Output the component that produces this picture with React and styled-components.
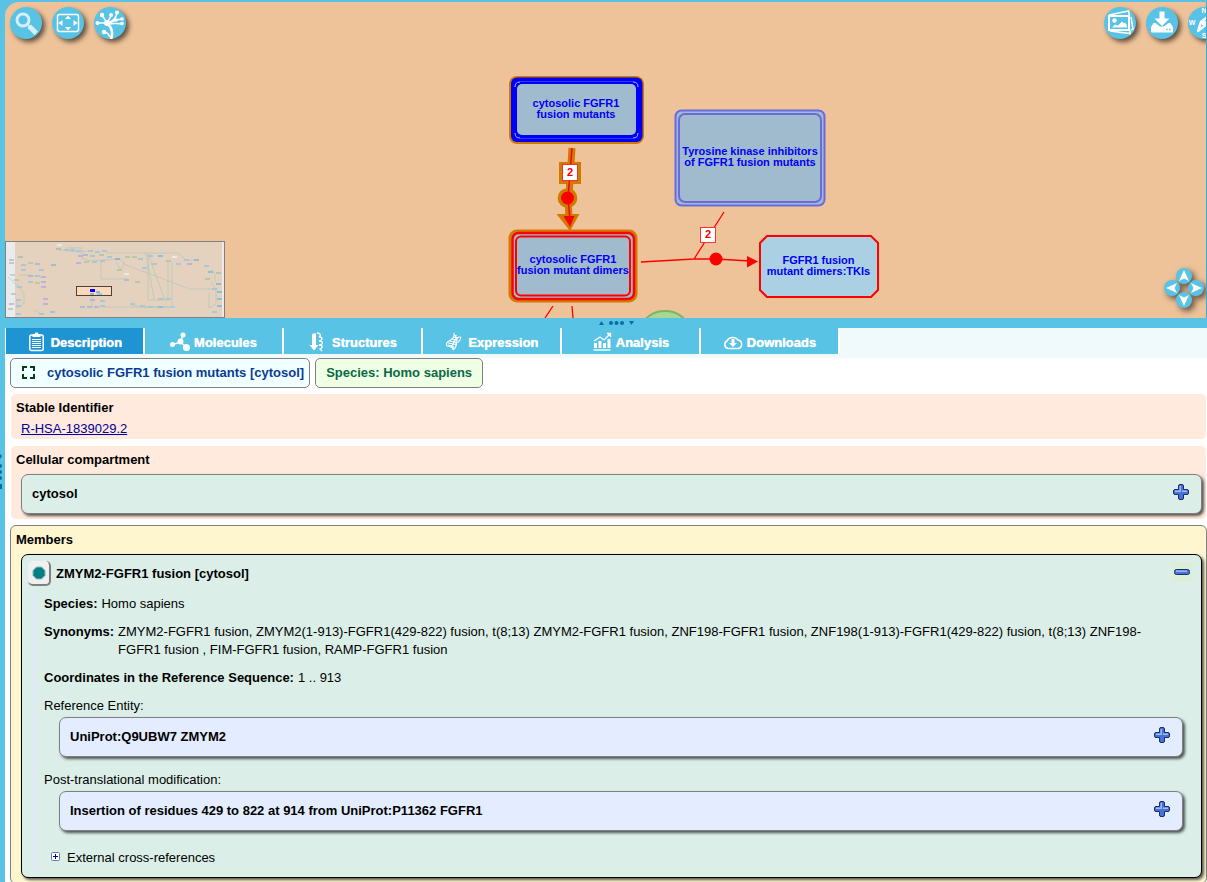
import React from "react";
import styled, { createGlobalStyle } from "styled-components";

const Global = createGlobalStyle`
  *, *::before, *::after { box-sizing: border-box; }
  html, body { margin: 0; height: 100%; }
  body {
    background: #58c3e5;
    color: #000;
    font: 13px/18px "Liberation Sans", Arial, Helvetica, sans-serif;
  }
  #root { height: 100%; }
  button { font: inherit; color: inherit; padding: 0; border: 0; cursor: pointer; }
`;

const Shell = styled.div`
  display: grid;
  grid-template-columns: 5px minmax(0, 1fr);
  height: 100vh;
  overflow: hidden;
  background: #58c3e5;
`;

const Rail = styled.div`
  display: flex;
  align-items: center;
  padding-top: 62px;
  svg { display: block; }
`;

const Main = styled.main`
  display: flex;
  flex-direction: column;
  min-width: 0;
  min-height: 0;
  padding-top: 2px;
`;

const Canvas = styled.section`
  position: relative;
  flex: none;
  height: 316px;
  overflow: hidden;
  border-right: 1px solid #3aa9d6;
  border-top-left-radius: 14px;
  background: #efc39a;
`;

const Scene = styled.svg`
  display: block;
  width: 100%;
  height: 100%;
  text {
    font: bold 11px "Liberation Sans", Arial, sans-serif;
    text-anchor: middle;
    fill: #0000f5;
  }
  text.count { fill: #f00000; }
`;

const Tools = styled.div`
  position: absolute;
  top: 5px;
  ${(p) => (p.$side === "left" ? "left: 5px;" : "right: -14px;")}
  display: flex;
  gap: 10px;
`;

const RoundButton = styled.button`
  width: 32px;
  height: 32px;
  border-radius: 50%;
  background: #58c3e5;
  box-shadow: 3px 3px 5px rgba(0, 0, 0, 0.6);
  svg { display: block; }
  text {
    font: bold 7px "Liberation Sans", Arial, sans-serif;
    text-anchor: middle;
    fill: #fff;
  }
`;

const Overview = styled.svg`
  position: absolute;
  left: 0;
  bottom: 0;
  width: 220px;
  height: 77px;
  border: 1px solid #808080;
  background: #e4d2bf;
`;

const Pad = styled.div`
  position: absolute;
  right: -18px;
  bottom: 14px;
  display: grid;
  grid-template-columns: repeat(5, 12px);
  grid-template-rows: repeat(3, 12px);
  filter: drop-shadow(3px 3px 3px rgba(0, 0, 0, 0.6));
`;

const PadButton = styled.button`
  grid-column: ${(p) => p.$col};
  grid-row: ${(p) => p.$row};
  width: 16px;
  height: 16px;
  border-radius: 50%;
  background: #58c3e5;
  svg { display: block; transform: rotate(${(p) => p.$turn || 0}deg); }
`;

const Splitter = styled.div`
  flex: none;
  display: flex;
  justify-content: center;
  align-items: center;
  height: 10px;
  padding-left: 22px;
  svg { display: block; }
`;

const Tabs = styled.nav`
  flex: none;
  display: flex;
  padding-bottom: 4px;
  border-left: 1px solid #fff;
  background: #f0fafc;
`;

const Tab = styled.button`
  display: flex;
  align-items: center;
  justify-content: center;
  gap: 4px;
  width: 139px;
  height: 26px;
  padding-top: 4px;
  border-right: 2px solid #fff;
  background: ${(p) => (p.$active ? "#1e94d2" : "#58c3e5")};
  color: #fff;
  font-weight: bold;
  text-shadow: 0 0 1px #fff;
  svg { margin-bottom: 3px; }
`;

const Details = styled.div`
  flex: 1;
  min-height: 0;
  overflow: hidden;
  display: flex;
  flex-direction: column;
  gap: 5px;
  padding-left: 5px;
  background: #fff;
  & > * { flex: none; }
`;

const Chips = styled.div`
  display: flex;
  gap: 5px;
`;

const Chip = styled.div`
  display: flex;
  align-items: center;
  gap: 12px;
  height: 30px;
  padding: 0 ${(p) => (p.$tone === "species" ? 10 : 5)}px 1px 10px;
  border: 1px solid #808080;
  border-radius: 5px;
  background: ${(p) => (p.$tone === "species" ? "#eeffe3" : "#f0ffff")};
  color: ${(p) => (p.$tone === "species" ? "#0c6848" : "#0b3a96")};
  font-weight: bold;
  svg { margin-bottom: 2px; }
`;

const Panel = styled.section`
  padding: 5px 4px ${(p) => (p.$compact ? 1 : 5)}px 5px;
  border: 1px solid ${(p) => (p.$members ? "#808080" : "#fff")};
  border-radius: 6px;
  background: ${(p) => (p.$members ? "#fdf6cf" : "#ffeadd")};
`;

const PanelTitle = styled.h2`
  margin: 0;
  font-size: 13px;
  line-height: 18px;
`;

const PanelBody = styled.div`
  padding: ${(p) => (p.$compact ? 3 : 5)}px 0 0 5px;
`;

const IdLink = styled.a`
  display: block;
  width: max-content;
  color: #00009c;
`;

const Entry = styled.div`
  display: flex;
  align-items: center;
  justify-content: space-between;
  height: 40px;
  padding: 0 10px;
  border: 1px solid #808080;
  border-radius: 7px;
  background: ${(p) => (p.$tone === "blue" ? "#e3edff" : "#dbefe8")};
  box-shadow: 2px 2px 3px rgba(0, 0, 0, 0.65);
  font-weight: bold;
`;

const Toggle = styled.button`
  width: 20px;
  height: 20px;
  ${(p) => (p.$open ? "margin-top: 1px;" : "margin-bottom: 4px;")}
  background: ${(p) => (p.$open ? "#dcedd8" : "transparent")};
  svg { display: block; }
`;

const Member = styled.article`
  padding: 6px 9px 4px 6px;
  border: 1px solid #000;
  border-radius: 7px;
  background: #dbefe8;
  box-shadow: 2px 2px 3px rgba(0, 0, 0, 0.65);
`;

const MemberHead = styled.header`
  display: flex;
  align-items: flex-start;
  gap: 5px;
  height: 25px;
`;

const MemberTitle = styled.h3`
  flex: 1;
  margin: 4px 0 0;
  font-size: 13px;
  line-height: 18px;
`;

const KindButton = styled.button`
  width: 23px;
  height: 25px;
  border-right: 2px solid #808080;
  border-bottom: 2px solid #808080;
  border-radius: 5px;
  background: #f0f0f0;
  svg { display: block; margin: 0 auto; }
`;

const MemberBody = styled.div`
  margin: 4px 9px 0 5px;
  padding: 5px 0 6px 8px;
  border-left: 3px solid #e4e9f9;
`;

const Facts = styled.dl`
  display: flex;
  flex-direction: column;
  gap: 10px;
  margin: 0;
`;

const Fact = styled.div`
  display: flex;
  gap: 4px;
  dt { flex: none; font-weight: bold; }
  dd { margin: 0; padding-right: 24px; }
`;

const Group = styled.section`
  margin-top: ${(p) => p.$gap}px;
`;

const GroupLabel = styled.div`
  margin-bottom: 2px;
`;

const Indent = styled.div`
  padding-left: 15px;
`;

const Expander = styled.button`
  display: flex;
  align-items: center;
  gap: 7px;
  margin: 18px 0 0 7px;
  background: none;
  svg { margin-bottom: 4px; }
`;

/* ---------- icons ---------- */

const Icon = ({ size = 32, children }) => (
  <svg width={size} height={size} viewBox={`0 0 ${size} ${size}`} fill="none" aria-hidden="true">
    {children}
  </svg>
);

const SearchIcon = () => (
  <Icon>
    <circle cx="13" cy="13" r="6" stroke="#d6effa" strokeWidth="3" />
    <path d="M17.500 17.500l2.500 2.500" stroke="#d6effa" strokeWidth="2" />
    <path d="M21 21l3.500 3.500" stroke="#d6effa" strokeWidth="5" strokeLinecap="square" />
  </Icon>
);

const FitIcon = () => (
  <Icon>
    <rect x="5.500" y="7.500" width="21" height="17" rx="2" stroke="#fff" strokeWidth="1.500" />
    <path d="M16 8.500l3 3.500h-6zM16 23.500l3-3.500h-6zM6.500 16l4-3v6zM25.500 16l-4-3v6z" fill="#fff" />
  </Icon>
);

const TreeIcon = () => (
  <Icon>
    <path d="M13 16L8 8M13 16l-9.500 0M13 16l4-7M14 16c6-2 8-5 9-10M15 17c3-3 5-3 7-4l6-1M15 17c4-1 9 0 13-.5M16 30c-1-2-3-5-6-5" stroke="#fff" strokeWidth="1.500" />
    <circle cx="13" cy="16" r="3" fill="#fff" />
    <circle cx="8" cy="8" r="2.200" fill="#fff" />
    <circle cx="3.500" cy="16" r="2" fill="#fff" />
    <circle cx="17" cy="8" r="2" fill="#fff" />
    <circle cx="23" cy="5.500" r="2" fill="#fff" />
    <circle cx="22" cy="13" r="1.800" fill="#fff" />
    <circle cx="28" cy="12" r="1.800" fill="#fff" />
    <circle cx="28" cy="16.500" r="1.800" fill="#fff" />
    <circle cx="10" cy="25" r="2.200" fill="#fff" />
    <path d="M17 32c2-5 1-11-3-15" stroke="#fff" strokeWidth="2.800" />
  </Icon>
);

const ImageIcon = () => (
  <Icon>
    <path d="M5 8L24.500 4l1 5M27 10l2 12-2 1M6 24l20 2.500v-3" stroke="#fff" strokeWidth="1.600" />
    <rect x="5" y="9" width="20" height="14" stroke="#fff" strokeWidth="2" />
    <circle cx="10.500" cy="13.500" r="2.200" fill="#fff" />
    <path d="M8 20.500l3-3 3 1 4-4 2 2 1-1 2 3v2z" fill="#fff" />
  </Icon>
);

const SaveIcon = () => (
  <Icon>
    <path d="M13.500 4.500h5v7h5L16 19l-7.500-7.500h5z" fill="#fff" />
    <path d="M7.500 16h2l5 4h3l5-4h2l2.500 4.500h-22z" fill="#fff" />
    <rect x="5" y="19.500" width="22" height="6" rx="1" fill="#fff" />
    <path d="M20 22.500h1.500M23 22.500h1.500" stroke="#58c3e5" strokeWidth="1.500" />
  </Icon>
);

const CompassIcon = () => (
  <Icon>
    <text x="16" y="6">N</text>
    <text x="4" y="18">W</text>
    <text x="16" y="31">S</text>
    <path d="M10 24l3-9 9-7-3 9z" stroke="#fff" strokeWidth="2.400" strokeLinejoin="round" />
    <circle cx="16" cy="16" r="2.500" fill="#fff" />
  </Icon>
);

const PadArrow = () => (
  <Icon size={16}>
    <path d="M8 2l5 11-5-2.500L3 13z" fill="#fff" />
  </Icon>
);

const ClipboardIcon = () => (
  <Icon size={20}>
    <rect x="2.800" y="3" width="13.400" height="15.500" rx="1.500" stroke="#fff" strokeWidth="1.500" />
    <path d="M5.500 2h2l1-1.500h2l1 1.500h2v3h-8z" fill="#fff" />
    <path d="M5 7.500h9M5 9.500h9M5 11.500h9M5 13.500h9M5 15.500h9" stroke="#fff" strokeWidth="1" />
  </Icon>
);

const MoleculeIcon = () => (
  <Icon size={20}>
    <path d="M13 3l-2.500 7L3 12.500M10.500 10l5.500 5" stroke="#fff" strokeWidth="1.400" />
    <circle cx="13" cy="3" r="2.500" fill="#fff" />
    <circle cx="10.500" cy="9.500" r="3" fill="#fff" />
    <circle cx="2.500" cy="12.500" r="2.500" fill="#fff" />
    <circle cx="16.500" cy="15.500" r="3.600" fill="#fff" />
  </Icon>
);

const StructureIcon = () => (
  <Icon size={20}>
    <path d="M4 2l4-1v12h2.500L6 18.500 1.500 13H4z" fill="#fff" />
    <path d="M9 1c3 0 5 2 2 4M11 5c4 0 4 3 0 4M11 9c5 0 4 4 0 4M11 13c4 0 4 3 1 4l2 2" stroke="#fff" strokeWidth="1.300" />
  </Icon>
);

const DnaIcon = () => (
  <Icon size={20}>
    <path d="M10 1c1 4-1 6-5 8-2 1-3 3-2 5 5 1 6-1 7-4 1-3 3-5 7-5M5 14c3 0 4 1 4 4M9 18c5-3 4-9 2-15M17 5c-1 5-3 6-6 6" stroke="#fff" strokeWidth="1.100" />
    <path d="M10 3l3 1M9 5l5 1M7 7l7 1M5 9l8 1.500M4 11l8 1.500M4 13l6 1.500M6 15l4 1" stroke="#fff" strokeWidth="1" />
  </Icon>
);

const AnalysisIcon = () => (
  <Icon size={20}>
    <path d="M1.500 18h17" stroke="#fff" strokeWidth="1.400" />
    <path d="M3.500 16v-5M8 16V9M12.500 16v-5M17 16V7" stroke="#fff" strokeWidth="3" />
    <path d="M2 9l6-4 4 3 6-6M15 1.500h3.500V5" stroke="#fff" strokeWidth="1.300" />
  </Icon>
);

const CloudIcon = () => (
  <Icon size={20}>
    <path d="M5 16.500a4 4 0 0 1-1-7.500 6 5 0 0 1 11-1 4.300 4.300 0 0 1 0 8.500z" stroke="#fff" strokeWidth="1.500" />
    <path d="M8.500 7h3v4H14l-4 4-4-4h2.500z" fill="#fff" />
  </Icon>
);

const ExpandIcon = () => (
  <Icon size={14}>
    <path d="M2 6V2h4M9 2h4v4M13 9v4H9M6 13H2V9" stroke="#0a3d12" strokeWidth="2" />
  </Icon>
);

const PlusIcon = () => (
  <Icon size={20}>
    <path d="M9 2.500h2a1.500 1.500 0 0 1 1.500 1.500v3.500H16A1.500 1.500 0 0 1 17.500 9v2a1.500 1.500 0 0 1-1.500 1.500h-3.500V16a1.500 1.500 0 0 1-1.500 1.500H9A1.500 1.500 0 0 1 7.500 16v-3.500H4A1.500 1.500 0 0 1 2.500 11V9A1.500 1.500 0 0 1 4 7.500h3.500V4A1.500 1.500 0 0 1 9 2.500z" fill="#4573d8" stroke="#1d2c66" />
    <path d="M9.200 4v5.200H4M11 9.200h5" stroke="#a0beff" strokeWidth="1.400" />
  </Icon>
);

const MinusIcon = () => (
  <Icon size={20}>
    <rect x="2.500" y="7.500" width="15" height="5" rx="2" fill="#4573d8" stroke="#1d2c66" />
    <path d="M4 9.200h11" stroke="#a0beff" strokeWidth="1.400" />
  </Icon>
);

/* ---------- overview map ---------- */

const MAP_NODES = [
  [53, 3, "#e9ece2"], [52, 7, "#a9c4bd"], [60, 8, "#abc7d3"], [66, 8, "#abc7d3"], [72, 9, "#abc7d3"], [74, 14, "#b9b5d9"],
  [79, 13, "#b9b5d9"], [84, 9, "#abc7d3"], [91, 10, "#abc7d3"], [98, 9, "#abc7d3"], [86, 14, "#abc7d3"], [95, 13, "#b5c9a9"],
  [72, 21, "#b9b5d9"], [80, 20, "#b5c9a9"], [88, 20, "#abc7d3"], [96, 19, "#abc7d3"], [103, 15, "#abc7d3"], [111, 17, "#8fb6d8"],
  [121, 15, "#b5c9a9"], [128, 15, "#b5c9a9"], [134, 17, "#abc7d3"], [144, 14, "#abc7d3"], [154, 14, "#8fc0d8"], [168, 15, "#e9ece2"],
  [162, 19, "#b5c9a9"], [180, 18, "#abc7d3"], [190, 18, "#8fc0d8"], [172, 22, "#abc7d3"], [183, 22, "#b9b5d9"], [138, 26, "#abc7d3"],
  [148, 22, "#abc7d3"], [113, 28, "#b5c9a9"], [120, 32, "#e9ece2"], [120, 38, "#aabfd4"], [131, 40, "#b5c9a9"], [200, 24, "#abc7d3"],
  [204, 30, "#8fc0d8"], [212, 31, "#b5c9a9"], [201, 37, "#b5c9a9"], [212, 42, "#8fc0d8"], [208, 47, "#abc7d3"], [213, 50, "#8fc0d8"],
  [213, 57, "#8fc0d8"], [213, 64, "#8fc0d8"], [208, 70, "#abc7d3"], [5, 18, "#c2c2de"], [5, 21, "#bdd2b5"], [14, 15, "#a7c7b9"],
  [17, 23, "#abc7d3"], [24, 21, "#bdcaa9"], [31, 22, "#b9b5d9"], [47, 23, "#a9bbd4"], [17, 28, "#abc7d3"], [35, 28, "#abc7d3"],
  [6, 33, "#bad3df"], [24, 34, "#b9b5d9"], [31, 34, "#abc7d3"], [37, 35, "#b9b5d9"], [10, 38, "#bdcaa9"], [24, 40, "#abc7d3"],
  [31, 41, "#bdcaa9"], [37, 40, "#b9b5d9"], [37, 45, "#b9b5d9"], [13, 45, "#a5c8da"], [7, 52, "#b9d2c0"], [12, 58, "#a5c8da"],
  [12, 64, "#a5c8da"], [5, 62, "#c2c2de"], [4, 67, "#bdd2b5"], [12, 72, "#a5c8da"], [39, 57, "#b9b5d9"], [39, 62, "#b9b5d9"],
  [46, 70, "#aabddb"], [35, 72, "#abc7d3"], [86, 58, "#b9b5d9"], [96, 59, "#abc7d3"],
  [76, 65, "#b9b5d9"], [83, 65, "#a9c4bd"], [90, 65, "#b9b5d9"], [96, 64, "#abc7d3"], [136, 64, "#abc7d3"], [144, 65, "#abc7d3"],
  [154, 57, "#abc7d3"], [162, 57, "#b0c7d3"], [154, 65, "#8fc0d8"], [166, 65, "#a9cde0"], [126, 62, "#abc7d3"],
];

const OverviewMap = () => (
  <Overview viewBox="0 0 218 75" aria-label="Pathway overview">
    <rect width="9" height="75" fill="#ebebee" />
    <rect x="216" width="2" height="75" fill="#ebebee" />
    <path
      d="M53 8l20 2 12-1M100 11h72l8 7h10M76 6v10l8 3 30-2 6 7M60 6h16M140 11l8 46M142 12v46h22M142 12l17 46M162 18v39M166 20v45H97M120 23l64 24h28M95 20v17h26M13 33h10l12 2M2 35l12 11 4 6v9l-7 5v-7M86 52v14M205 27l4 5v8M205 40l5 8v14l-7 4V50M110 20l5 8 4-8M126 63l10 2h30M28 68l8 4"
      fill="none" stroke="#b5c4ba" strokeWidth="1" opacity="0.700"
    />
    {MAP_NODES.map(([x, y, c], i) => (
      <rect key={i} x={x - 2} y={y - 1} width="5" height="2" fill={c} />
    ))}
    <rect x="70.500" y="44.500" width="35" height="9" fill="#fbd9bb" stroke="#4c4038" />
    <rect x="84" y="47" width="5" height="3" fill="#0000f5" />
    <rect x="90" y="49" width="4" height="2" fill="#a3acd4" />
    <rect x="84" y="51" width="4" height="2" fill="#8fb0c8" />
    <rect x="91" y="51" width="5" height="2" fill="#9cc9e0" />
  </Overview>
);

/* ---------- pathway diagram ---------- */

const Diagram = () => (
  <Scene aria-label="Pathway diagram">
    <g transform="translate(-5 -2)">
      <ellipse cx="665" cy="329" rx="23" ry="18" fill="#a5d990" stroke="#7fb36c" strokeWidth="2" />

      <path d="M572 148l-3 48M568 198l1 20" stroke="#d07a00" strokeWidth="7" fill="none" />
      <rect x="559" y="162" width="22" height="22" fill="#d07a00" />
      <circle cx="567.500" cy="198" r="9.800" fill="#d07a00" />
      <path d="M556.500 214h23L570 231z" fill="#d07a00" />
      <path d="M572 148l-4 50 2 22" stroke="#f00" fill="none" strokeWidth="1.500" />
      <circle cx="567.500" cy="198" r="6.500" fill="#f00" />
      <path d="M563.500 216h11l-4.500 11z" fill="#f00" />
      <rect x="562.500" y="164.500" width="15" height="16" fill="#fff" stroke="#e33" />
      <text className="count" x="570" y="176">2</text>

      <path d="M641 262l53-3 22 0 34 2M724 212l-30 47M553 306l-8 12M572 306l1 12" stroke="#f00" strokeWidth="1.300" fill="none" />
      <circle cx="716" cy="259" r="6.500" fill="#f00" />
      <path d="M747 256v11.500l11-6z" fill="#f00" />
      <rect x="700.500" y="227.500" width="15" height="15" fill="#fff" stroke="#f33" />
      <text className="count" x="708" y="238">2</text>

      <rect x="509" y="76" width="135" height="68" rx="8" fill="#d07a00" />
      <rect x="511" y="77.500" width="131.500" height="64.500" rx="6" fill="#0000fa" />
      <path d="M515 87q0-5 5-5M633 82q5 0 5 5M638 133q0 5-5 5M520 138q-5 0-5-5" stroke="#a0bace" fill="none" />
      <path d="M520 81.500h113M520 138.500h113" stroke="#2c3cf0" fill="none" />
      <rect x="517" y="84" width="119" height="51" rx="5" fill="#a0bace" />
      <text x="576" y="107">cytosolic FGFR1</text>
      <text x="576" y="118">fusion mutants</text>

      <rect x="510" y="231" width="126" height="70" rx="7" fill="#a0bace" stroke="#d07a00" strokeWidth="3" />
      <rect x="512.500" y="233" width="121.500" height="66" rx="6" fill="none" stroke="#f00" strokeWidth="2.500" />
      <rect x="516" y="236.500" width="114" height="59" rx="5" fill="none" stroke="#f00" strokeWidth="2" />
      <text x="573" y="263">cytosolic FGFR1</text>
      <text x="573" y="274">fusion mutant dimers</text>

      <rect x="675.500" y="110.500" width="149" height="95" rx="6" fill="#a0bace" stroke="#6a6ade" strokeWidth="2" />
      <rect x="679" y="114" width="142" height="88" rx="6" fill="none" stroke="#6a6ade" strokeWidth="2" />
      <text x="750" y="155">Tyrosine kinase inhibitors</text>
      <text x="750" y="166">of FGFR1 fusion mutants</text>

      <path d="M767 236h104l7 7v47l-7 7H767l-7-7v-47z" fill="#abd0e3" stroke="#f00" strokeWidth="2" />
      <text x="818.500" y="264">FGFR1 fusion</text>
      <text x="818.500" y="275">mutant dimers:TKIs</text>
    </g>
  </Scene>
);

const TABS = [
  ["Description", ClipboardIcon],
  ["Molecules", MoleculeIcon],
  ["Structures", StructureIcon],
  ["Expression", DnaIcon],
  ["Analysis", AnalysisIcon],
  ["Downloads", CloudIcon],
];

const ExpandableEntry = ({ tone, children }) => (
  <Entry $tone={tone}>
    <span>{children}</span>
    <Toggle aria-label="Expand"><PlusIcon /></Toggle>
  </Entry>
);

export default function App() {
  return (
    <>
      <Global />
      <Shell>
        <Rail>
          <svg width="3" height="36" fill="#0a6ea5" aria-hidden="true">
            <path d="M0 0l2 2-2 3z" />
            <circle cx="0" cy="12" r="2" />
            <circle cx="0" cy="18" r="2" />
            <circle cx="0" cy="24" r="2" />
            <path d="M0 30h2v5H0z" />
          </svg>
        </Rail>
        <Main>
          <Canvas>
            <Diagram />
            <Tools $side="left">
              <RoundButton aria-label="Search"><SearchIcon /></RoundButton>
              <RoundButton aria-label="Fit to window"><FitIcon /></RoundButton>
              <RoundButton aria-label="Pathway hierarchy"><TreeIcon /></RoundButton>
            </Tools>
            <Tools $side="right">
              <RoundButton aria-label="Illustrations"><ImageIcon /></RoundButton>
              <RoundButton aria-label="Export"><SaveIcon /></RoundButton>
              <RoundButton aria-label="Key"><CompassIcon /></RoundButton>
            </Tools>
            <OverviewMap />
            <Pad>
              <PadButton $col={2} $row={1} aria-label="Up"><PadArrow /></PadButton>
              <PadButton $col={1} $row={2} $turn={-90} aria-label="Left"><PadArrow /></PadButton>
              <PadButton $col={3} $row={2} $turn={90} aria-label="Right"><PadArrow /></PadButton>
              <PadButton $col={2} $row={3} $turn={180} aria-label="Down"><PadArrow /></PadButton>
              <PadButton $col={5} $row={1} aria-label="Zoom in" />
              <PadButton $col={5} $row={3} aria-label="Zoom out" />
            </Pad>
          </Canvas>

          <Splitter>
            <svg width="36" height="6" fill="#0a6ea5" aria-hidden="true">
              <path d="M0 5l2.500-4L5 5zM30 1h5l-2.500 4z" />
              <circle cx="12" cy="3" r="2" />
              <circle cx="17.500" cy="3" r="2" />
              <circle cx="23" cy="3" r="2" />
            </svg>
          </Splitter>

          <Tabs>
            {TABS.map(([label, Glyph], i) => (
              <Tab key={label} $active={i === 0}><Glyph />{label}</Tab>
            ))}
          </Tabs>

          <Details>
            <Chips>
              <Chip><ExpandIcon />cytosolic FGFR1 fusion mutants [cytosol]</Chip>
              <Chip $tone="species">Species: Homo sapiens</Chip>
            </Chips>

            <Panel $compact>
              <PanelTitle>Stable Identifier</PanelTitle>
              <PanelBody $compact><IdLink href="#R-HSA-1839029.2">R-HSA-1839029.2</IdLink></PanelBody>
            </Panel>

            <Panel>
              <PanelTitle>Cellular compartment</PanelTitle>
              <PanelBody><ExpandableEntry>cytosol</ExpandableEntry></PanelBody>
            </Panel>

            <Panel $members>
              <PanelTitle>Members</PanelTitle>
              <PanelBody>
                <Member>
                  <MemberHead>
                    <KindButton aria-label="Show protein">
                      <Icon size={14}>
                        <path d="M4.500 1h5L13 4.500v5L9.500 13h-5L1 9.500v-5z" fill="#008080" stroke="#8fb5b5" />
                      </Icon>
                    </KindButton>
                    <MemberTitle>ZMYM2-FGFR1 fusion [cytosol]</MemberTitle>
                    <Toggle $open aria-label="Collapse"><MinusIcon /></Toggle>
                  </MemberHead>
                  <MemberBody>
                    <Facts>
                      <Fact><dt>Species:</dt><dd>Homo sapiens</dd></Fact>
                      <Fact>
                        <dt>Synonyms:</dt>
                        <dd>
                          ZMYM2-FGFR1 fusion, ZMYM2(1-913)-FGFR1(429-822) fusion, t(8;13) ZMYM2-FGFR1 fusion, ZNF198-FGFR1 fusion,
                          ZNF198(1-913)-FGFR1(429-822) fusion, t(8;13) ZNF198-FGFR1 fusion , FIM-FGFR1 fusion, RAMP-FGFR1 fusion
                        </dd>
                      </Fact>
                      <Fact><dt>Coordinates in the Reference Sequence:</dt><dd>1 .. 913</dd></Fact>
                    </Facts>
                    <Group $gap={10}>
                      <GroupLabel>Reference Entity:</GroupLabel>
                      <Indent><ExpandableEntry tone="blue">UniProt:Q9UBW7 ZMYM2</ExpandableEntry></Indent>
                    </Group>
                    <Group $gap={14}>
                      <GroupLabel>Post-translational modification:</GroupLabel>
                      <Indent>
                        <ExpandableEntry tone="blue">
                          Insertion of residues 429 to 822 at 914 from UniProt:P11362 FGFR1
                        </ExpandableEntry>
                      </Indent>
                    </Group>
                    <Expander>
                      <svg width="9" height="9" fill="none" aria-hidden="true">
                        <rect x="0.500" y="0.500" width="8" height="8" rx="1" fill="#fff" stroke="#6a7aa8" />
                        <path d="M2 4.500h5M4.500 2v5" stroke="#00008c" />
                      </svg>
                      External cross-references
                    </Expander>
                  </MemberBody>
                </Member>
              </PanelBody>
            </Panel>
          </Details>
        </Main>
      </Shell>
    </>
  );
}
